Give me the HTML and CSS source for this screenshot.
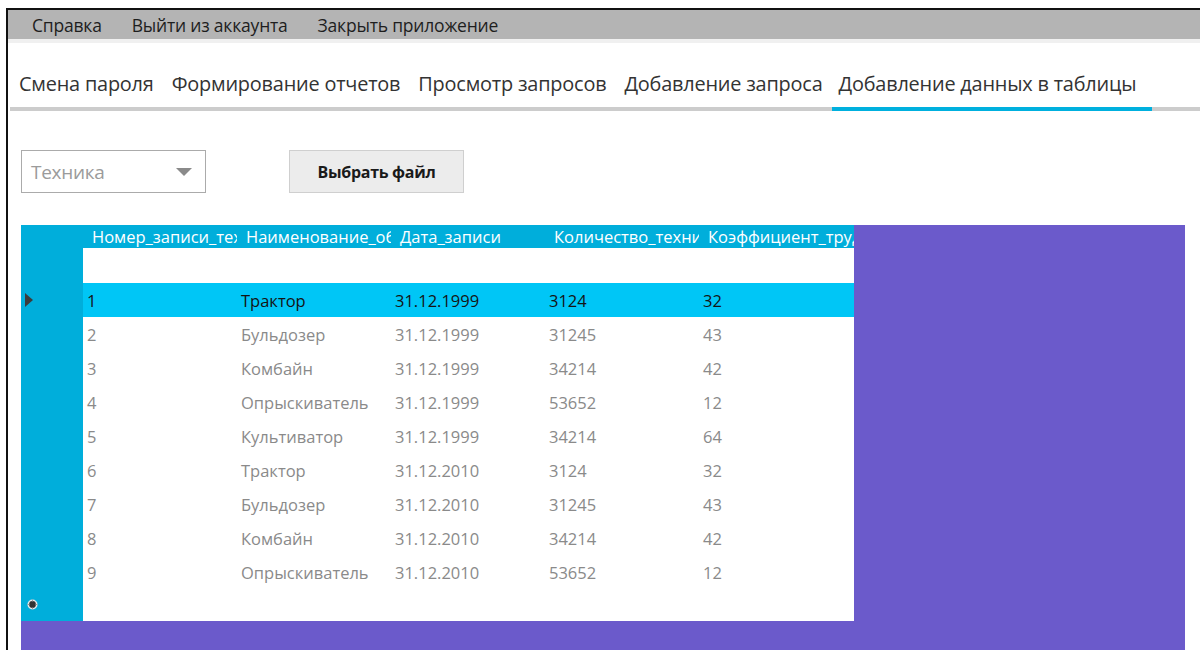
FILE: index.html
```html
<!DOCTYPE html>
<html lang="ru">
<head>
<meta charset="utf-8">
<title>Добавление данных в таблицы</title>
<link rel="stylesheet" href="styles.css">
</head>
<body>
<div class="window">
  <nav class="menubar">
    <span class="menu-item">Справка</span>
    <span class="menu-item">Выйти из аккаунта</span>
    <span class="menu-item">Закрыть приложение</span>
  </nav>
  <div class="menu-edge"></div>

  <div class="tabs">
    <span class="tab">Смена пароля</span>
    <span class="tab">Формирование отчетов</span>
    <span class="tab">Просмотр запросов</span>
    <span class="tab">Добавление запроса</span>
    <span class="tab active">Добавление данных в таблицы</span>
  </div>

  <div class="controls">
    <div class="combo">
      <span class="combo-text">Техника</span>
      <span class="combo-arrow"></span>
    </div>
    <button class="btn">Выбрать файл</button>
  </div>

  <div class="grid-area">
    <div class="grid">
      <div class="row-headers">
        <div class="rh rh-head"></div>
        <div class="rh rh-blank"></div>
        <div class="rh rh-row"><span class="cur-arrow"></span></div>
        <div class="rh rh-row"></div>
        <div class="rh rh-row"></div>
        <div class="rh rh-row"></div>
        <div class="rh rh-row"></div>
        <div class="rh rh-row"></div>
        <div class="rh rh-row"></div>
        <div class="rh rh-row"></div>
        <div class="rh rh-row"></div>
        <div class="rh rh-new">
          <svg class="new-mark" width="11" height="11" viewBox="0 0 11 11">
            <circle cx="5.5" cy="5.5" r="5" fill="#e8e8e8"/>
            <circle cx="5.5" cy="5.5" r="3.4" fill="#333333"/>
            <path d="M5.5 0.5v2M5.5 8.5v2M0.5 5.5h2M8.5 5.5h2" stroke="#9a9a9a" stroke-width="1"/>
          </svg>
        </div>
      </div>
      <div class="cells">
        <div class="hrow">
          <span class="hc">Номер_записи_техники</span>
          <span class="hc">Наименование_оборудования</span>
          <span class="hc">Дата_записи</span>
          <span class="hc">Количество_техники</span>
          <span class="hc">Коэффициент_трудоемкости</span>
        </div>
        <div class="drow blank"></div>
        <div class="drow selected"><span>1</span><span>Трактор</span><span>31.12.1999</span><span>3124</span><span>32</span></div>
        <div class="drow"><span>2</span><span>Бульдозер</span><span>31.12.1999</span><span>31245</span><span>43</span></div>
        <div class="drow"><span>3</span><span>Комбайн</span><span>31.12.1999</span><span>34214</span><span>42</span></div>
        <div class="drow"><span>4</span><span>Опрыскиватель</span><span>31.12.1999</span><span>53652</span><span>12</span></div>
        <div class="drow"><span>5</span><span>Культиватор</span><span>31.12.1999</span><span>34214</span><span>64</span></div>
        <div class="drow"><span>6</span><span>Трактор</span><span>31.12.2010</span><span>3124</span><span>32</span></div>
        <div class="drow"><span>7</span><span>Бульдозер</span><span>31.12.2010</span><span>31245</span><span>43</span></div>
        <div class="drow"><span>8</span><span>Комбайн</span><span>31.12.2010</span><span>34214</span><span>42</span></div>
        <div class="drow"><span>9</span><span>Опрыскиватель</span><span>31.12.2010</span><span>53652</span><span>12</span></div>
        <div class="drow newrow"></div>
      </div>
    </div>
  </div>
</div>
</body>
</html>
```

FILE: styles.css
```css
html, body {
  margin: 0;
  padding: 0;
  background: #ffffff;
  overflow: hidden;
}

body {
  font-family: "Open Sans", "Noto Sans", sans-serif;
  color: #222;
}

.window {
  margin: 8px 0 0 6px;
  height: 650px;
  border-top: 2px solid #111;
  border-left: 2px solid #111;
  background: #fff;
}

/* top menu */
.menubar {
  height: 29px;
  background: #b4b4b4;
  display: flex;
  align-items: center;
  gap: 30px;
  padding-left: 24px;
  font-size: 17.5px;
  color: #1e1e1e;
  letter-spacing: -0.2px;
}

.menu-edge {
  height: 4px;
  background: #f0f0f0;
}

/* tab strip */
.tabs {
  display: flex;
  margin: 0 0 0 2px;
  padding-top: 27px;
  border-bottom: 4px solid #cccccc;
}

.tab {
  padding: 0 9px 10px 9px;
  font-size: 19.9px;
  line-height: 27px;
  color: #333;
  white-space: nowrap;
  margin-bottom: -4px;
  border-bottom: 4px solid transparent;
  letter-spacing: -0.2px;
}

.tab.active {
  border-bottom-color: #00b0de;
  padding-right: 16px;
  padding-left: 7px;
}

/* combo + button */
.controls {
  display: flex;
  align-items: center;
  gap: 83px;
  padding: 39px 0 0 13px;
}

.combo {
  display: flex;
  align-items: center;
  justify-content: space-between;
  padding: 0 13px 0 9px;
  box-sizing: border-box;
  width: 185px;
  height: 43px;
  border: 1px solid #ababab;
}

.combo-text {
  font-size: 19px;
  color: #9b9b9b;
  letter-spacing: -0.3px;
}

.combo-arrow {
  width: 0;
  height: 0;
  border-left: 8px solid transparent;
  border-right: 8px solid transparent;
  border-top: 8px solid #8a8a8a;
}

.btn {
  width: 175px;
  height: 43px;
  border: 1px solid #cfcfcf;
  background: #ececec;
  font-family: "Open Sans", "Noto Sans", sans-serif;
  font-weight: 700;
  font-size: 16px;
  color: #1a1a1a;
  padding: 0;
  letter-spacing: -0.3px;
}

/* data grid */
.grid-area {
  margin: 32px 0 0 13px;
  width: 1164px;
  height: 440px;
  background: #6b5acb;
}

.grid {
  display: flex;
  width: 833px;
  background: #fff;
}

.row-headers {
  width: 62px;
  background: #00aedb;
}

.rh { position: relative; }
.rh-head { height: 23px; }
.rh-blank { height: 35px; }
.rh-row { height: 34px; }
.rh-new { height: 32px; }

.cur-arrow {
  position: absolute;
  left: 4px;
  top: 10px;
  width: 0;
  height: 0;
  border-top: 7px solid transparent;
  border-bottom: 7px solid transparent;
  border-left: 8px solid #3c3c3c;
}

.new-mark {
  position: absolute;
  left: 6px;
  top: 10px;
}

.cells {
  flex: 1;
  min-width: 0;
}

.hrow, .drow {
  display: grid;
  grid-template-columns: 154px 154px 154px 154px 155px;
}

.hrow {
  height: 23px;
  background: #00aedb;
  color: #ffffff;
  font-size: 16.5px;
  align-items: center;
}

.hc {
  padding-left: 9px;
  white-space: nowrap;
  overflow: hidden;
  min-width: 0;
  letter-spacing: 0;
}

.drow {
  height: 34px;
  align-items: center;
  font-size: 16.5px;
  color: #8a8a8a;
  letter-spacing: 0;
}

.drow span { padding-left: 4px; }

.drow.blank { height: 35px; }
.drow.newrow { height: 32px; }

.drow.selected {
  background: #00c6f6;
  color: #141414;
}
```
